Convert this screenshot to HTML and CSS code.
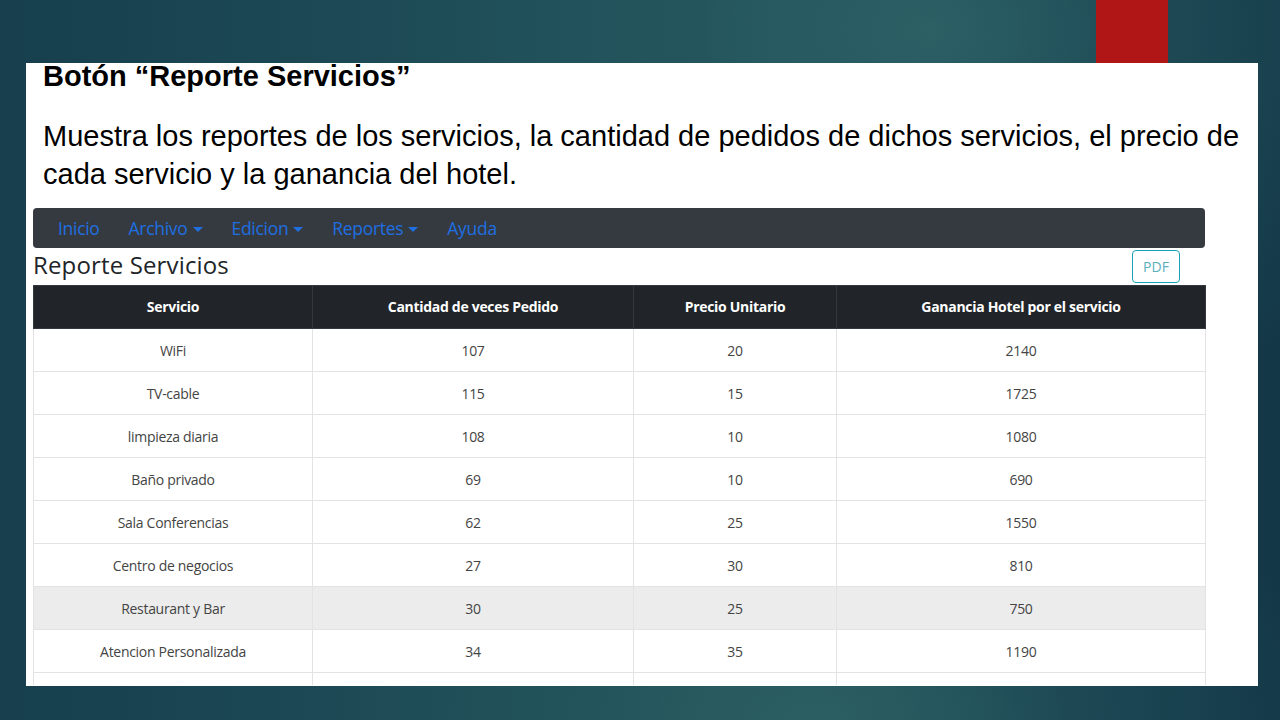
FILE: index.html
```html
<!DOCTYPE html>
<html lang="es">
<head>
<meta charset="utf-8">
<title>Reporte Servicios</title>
<link rel="stylesheet" href="styles.css">
</head>
<body>
<div class="slide">
  <div class="accent"></div>
  <div class="panel">
    <h1 class="title">Botón “Reporte Servicios”</h1>
    <p class="desc">Muestra los reportes de los servicios, la cantidad de pedidos de dichos servicios, el precio de cada servicio y la ganancia del hotel.</p>
    <div class="app">
      <nav class="navbar">
        <a class="nav-link">Inicio</a>
        <a class="nav-link dropdown">Archivo</a>
        <a class="nav-link dropdown">Edicion</a>
        <a class="nav-link dropdown">Reportes</a>
        <a class="nav-link">Ayuda</a>
      </nav>
      <div class="report-head">
        <h2 class="report-title">Reporte Servicios</h2>
        <button class="btn-pdf">PDF</button>
      </div>
      <table class="report">
        <colgroup>
          <col class="c1"><col class="c2"><col class="c3"><col class="c4">
        </colgroup>
        <thead>
          <tr><th>Servicio</th><th>Cantidad de veces Pedido</th><th>Precio Unitario</th><th>Ganancia Hotel por el servicio</th></tr>
        </thead>
        <tbody>
          <tr><td>WiFi</td><td>107</td><td>20</td><td>2140</td></tr>
          <tr><td>TV-cable</td><td>115</td><td>15</td><td>1725</td></tr>
          <tr><td>limpieza diaria</td><td>108</td><td>10</td><td>1080</td></tr>
          <tr><td>Baño privado</td><td>69</td><td>10</td><td>690</td></tr>
          <tr><td>Sala Conferencias</td><td>62</td><td>25</td><td>1550</td></tr>
          <tr><td>Centro de negocios</td><td>27</td><td>30</td><td>810</td></tr>
          <tr class="hover"><td>Restaurant y Bar</td><td>30</td><td>25</td><td>750</td></tr>
          <tr><td>Atencion Personalizada</td><td>34</td><td>35</td><td>1190</td></tr>
          <tr><td>&nbsp;</td><td>&nbsp;</td><td>&nbsp;</td><td>&nbsp;</td></tr>
        </tbody>
      </table>
    </div>
  </div>
</div>
</body>
</html>
```

FILE: styles.css
```css
* { box-sizing: border-box; }
html, body { margin: 0; padding: 0; }
body {
  width: 1280px;
  height: 720px;
  overflow: hidden;
}
.slide {
  position: relative;
  width: 1280px;
  height: 720px;
  padding-top: 63px;
  padding-left: 26px;
  background:
    radial-gradient(ellipse 520px 420px at 930px 30px, rgba(46,100,104,0.85) 0%, rgba(40,90,96,0.45) 45%, rgba(30,70,82,0) 100%),
    radial-gradient(ellipse 520px 300px at 820px 720px, rgba(44,96,100,0.9) 0%, rgba(38,86,92,0.4) 50%, rgba(30,70,82,0) 100%),
    linear-gradient(90deg, #173f4e 0%, #1f4e58 40%, #22535c 62%, #17404f 82%, #133747 100%);
}
.accent {
  position: absolute;
  left: 1096px;
  top: 0;
  width: 72px;
  height: 63px;
  background: #b01616;
}
.panel {
  width: 1232px;
  height: 623px;
  background: #fff;
  padding: 0 0 0 17px;
}
.title {
  margin: 0;
  font-family: "Liberation Sans", Arial, sans-serif;
  font-weight: bold;
  font-size: 29px;
  line-height: 26px;
  color: #000;
}
.desc {
  margin: 28px 0 0 0;
  width: 1212px;
  font-family: "Liberation Sans", Arial, sans-serif;
  font-size: 29px;
  line-height: 38px;
  color: #000;
}
.app {
  margin: 15px 0 0 -10px;
  width: 1174px;
  height: 477px;
  overflow: hidden;
  font-family: "Open Sans", "Noto Sans", sans-serif;
}
.navbar {
  width: 1172px;
  height: 40px;
  background: #343a40;
  border-radius: 4px;
  display: flex;
  align-items: center;
  padding-left: 25px;
  gap: 29px;
}
.nav-link {
  color: #1f6fe0;
  font-size: 17.5px;
  letter-spacing: -0.3px;
}
.dropdown::after {
  content: "";
  display: inline-block;
  margin-left: 5px;
  vertical-align: 3px;
  border-top: 5px solid #1f6fe0;
  border-left: 5px solid transparent;
  border-right: 5px solid transparent;
}
.report-head {
  width: 1172px;
  height: 37px;
  display: flex;
  align-items: center;
  justify-content: space-between;
  padding-right: 25px;
}
.report-title {
  margin: 0 0 5px 0;
  font-weight: normal;
  font-size: 24px;
  letter-spacing: 0.15px;
  color: #212529;
}
.btn-pdf {
  width: 48px;
  height: 33px;
  border: 1px solid #17a2b8;
  border-radius: 4px;
  background: #fff;
  color: #5aaebc;
  font-family: "Open Sans", sans-serif;
  font-size: 14px;
  padding: 0;
}
.report {
  width: 1172px;
  border-collapse: collapse;
  table-layout: fixed;
  font-size: 14px;
}
.c1 { width: 279px; }
.c2 { width: 321px; }
.c3 { width: 203px; }
.c4 { width: 369px; }
.report th {
  height: 43px;
  padding: 0 0 2px 0;
  background: #212529;
  color: #fff;
  font-weight: bold;
  border: 1px solid #32383e;
  text-align: center;
  letter-spacing: -0.3px;
}
.report td {
  height: 43px;
  padding: 0;
  border: 1px solid #e3e3e3;
  text-align: center;
  color: #444;
  letter-spacing: -0.3px;
}
.report tr.hover td { background: #ececec; }
```
